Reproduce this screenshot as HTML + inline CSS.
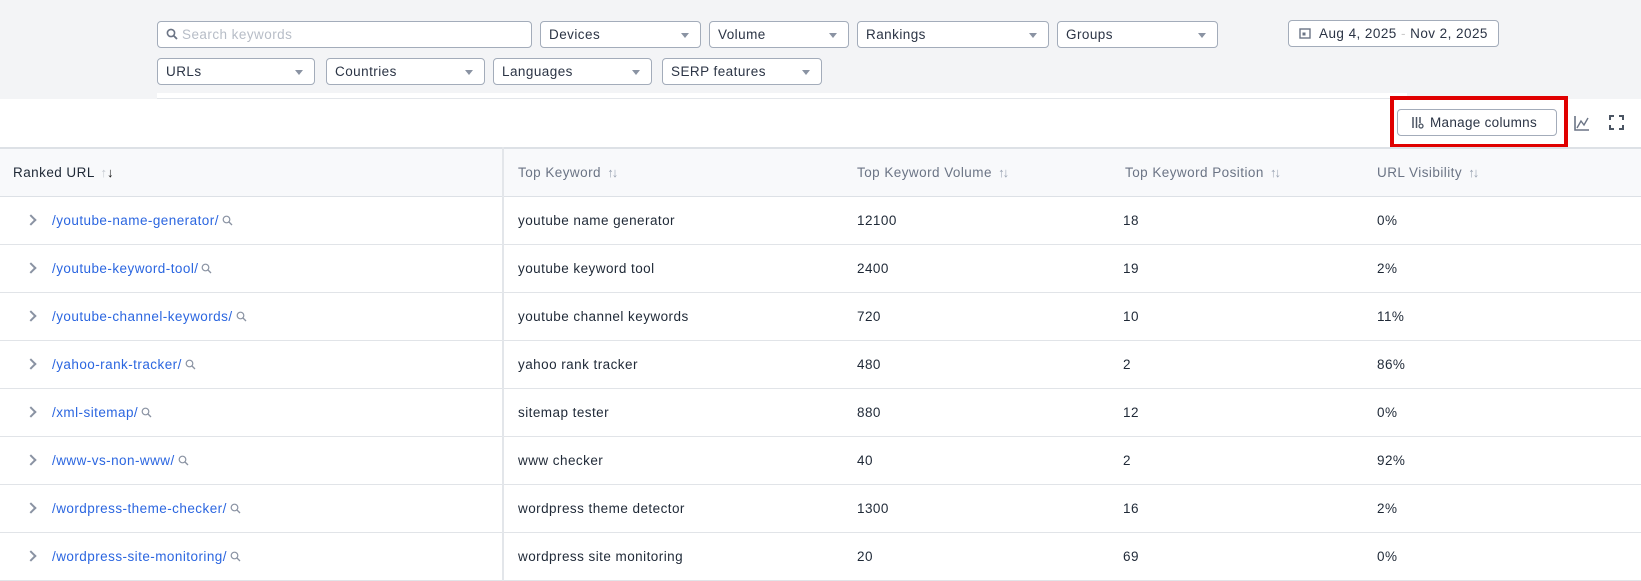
<!DOCTYPE html>
<html><head><meta charset="utf-8"><style>
*{box-sizing:border-box;margin:0;padding:0}
body{width:1641px;height:581px;overflow:hidden;background:#f3f4f6;font-family:"Liberation Sans",sans-serif;font-size:13.5px;color:#1f2937;position:relative;letter-spacing:0.45px}
.f{position:absolute;height:27px;border:1px solid #a3acba;border-radius:4px;background:#fff;color:#2b3445;padding-left:8px;line-height:25px;font-size:13.5px}
.f .c{position:absolute;right:11px;top:11px;width:0;height:0;border-left:4px solid transparent;border-right:4px solid transparent;border-top:5px solid #8a93a3}
.panel{position:absolute;left:0;top:99px;width:1641px;height:482px;background:#fff}
.strip{position:absolute;left:157px;top:93px;width:1250px;height:6px;background:#fff;border-bottom:1px solid #e3e6ea}
.hdr{position:absolute;left:0;top:147px;width:1641px;height:50px;background:#f8f9fb;border-top:2px solid #dde1e6;border-bottom:1px solid #dde1e6}
.div{position:absolute;left:502px;top:147px;width:2px;height:434px;background:#e3e6ea}
.h{position:absolute;top:165px;font-size:13.5px;color:#6b7485}
.r{position:absolute;left:0;width:1641px;height:48px;border-bottom:1px solid #e1e4e8}
.r span{position:absolute;top:16px}
.a{color:#2b66e0}
.chev{position:absolute;left:27px;top:19px;width:8px;height:8px;border-right:2px solid #8a93a3;border-top:2px solid #8a93a3;transform:rotate(45deg)}
.ar{color:#9aa3b2;font-size:13px;font-weight:bold;letter-spacing:-2px;margin-left:2px}
.mg{vertical-align:-1px;margin-left:3px}
</style></head><body>
<div class="f" style="left:157px;top:21px;width:375px;color:#b7bdc7"><svg width="12" height="12" style="vertical-align:-1px;margin-right:4px"><circle cx="5" cy="5" r="3.6" fill="none" stroke="#6b7485" stroke-width="1.6"/><path d="M7.6 7.6L11 11" stroke="#6b7485" stroke-width="1.8"/></svg>Search keywords</div>
<div class="f" style="left:540px;top:21px;width:161px">Devices<i class="c"></i></div>
<div class="f" style="left:709px;top:21px;width:140px">Volume<i class="c"></i></div>
<div class="f" style="left:857px;top:21px;width:192px">Rankings<i class="c"></i></div>
<div class="f" style="left:1057px;top:21px;width:161px">Groups<i class="c"></i></div>
<div class="f" style="left:1288px;top:20px;width:211px;padding-left:10px"><svg width="12" height="12" style="vertical-align:-1px;margin-right:8px"><rect x="1" y="2" width="10" height="9" fill="none" stroke="#6b7485" stroke-width="1.4"/><rect x="3.5" y="5.5" width="3" height="3" fill="#6b7485"/></svg>Aug 4, 2025 <span style="color:#ccc">-</span> Nov 2, 2025</div>
<div class="f" style="left:157px;top:58px;width:158px">URLs<i class="c"></i></div>
<div class="f" style="left:326px;top:58px;width:159px">Countries<i class="c"></i></div>
<div class="f" style="left:493px;top:58px;width:159px">Languages<i class="c"></i></div>
<div class="f" style="left:662px;top:58px;width:160px">SERP features<i class="c"></i></div>
<div class="panel"></div>
<div class="strip"></div>
<div style="position:absolute;left:1390px;top:96px;width:178px;height:52px;border:4px solid #e00000"></div>
<div class="f" style="left:1397px;top:109px;width:160px;height:27px;border-color:#a3acba;padding-left:13px;font-size:13.5px;letter-spacing:0.3px"><svg width="14" height="14" style="vertical-align:-2px;margin-right:5px"><path d="M2 2V13M5.5 2V13M9 2V8" stroke="#4b5563" stroke-width="1.5" fill="none"/><circle cx="10" cy="11" r="2" fill="none" stroke="#4b5563" stroke-width="1.3"/></svg>Manage columns</div>
<svg style="position:absolute;left:1574px;top:115px" width="16" height="16"><path d="M1 1V15H15" stroke="#6b7485" stroke-width="1.6" fill="none"/><path d="M3 13L7 6L10 10L14 3" stroke="#6b7485" stroke-width="1.4" fill="none"/></svg>
<svg style="position:absolute;left:1609px;top:115px" width="15" height="15"><path d="M1 5V1H5M10 1H14V5M14 10V14H10M5 14H1V10" stroke="#4b5563" stroke-width="2" fill="none"/></svg>
<div class="hdr"></div>
<div class="h" style="left:13px;color:#1f2937">Ranked URL <span class="ar" style="color:#c5c9d0">↑</span><span class="ar" style="color:#111">↓</span></div>
<div class="h" style="left:518px">Top Keyword <span class="ar">↑↓</span></div>
<div class="h" style="left:857px">Top Keyword Volume <span class="ar">↑↓</span></div>
<div class="h" style="left:1125px">Top Keyword Position <span class="ar">↑↓</span></div>
<div class="h" style="left:1377px">URL Visibility <span class="ar">↑↓</span></div>

<div class="r" style="top:197px"><i class="chev"></i><span class="a" style="left:52px">/youtube-name-generator/<svg class="mg" width="11" height="11"><circle cx="4.5" cy="4.5" r="3.3" fill="none" stroke="#8a93a3" stroke-width="1.2"/><path d="M7 7L10 10" stroke="#8a93a3" stroke-width="1.3"/></svg></span><span style="left:518px">youtube name generator</span><span style="left:857px">12100</span><span style="left:1123px">18</span><span style="left:1377px">0%</span></div>
<div class="r" style="top:245px"><i class="chev"></i><span class="a" style="left:52px">/youtube-keyword-tool/<svg class="mg" width="11" height="11"><circle cx="4.5" cy="4.5" r="3.3" fill="none" stroke="#8a93a3" stroke-width="1.2"/><path d="M7 7L10 10" stroke="#8a93a3" stroke-width="1.3"/></svg></span><span style="left:518px">youtube keyword tool</span><span style="left:857px">2400</span><span style="left:1123px">19</span><span style="left:1377px">2%</span></div>
<div class="r" style="top:293px"><i class="chev"></i><span class="a" style="left:52px">/youtube-channel-keywords/<svg class="mg" width="11" height="11"><circle cx="4.5" cy="4.5" r="3.3" fill="none" stroke="#8a93a3" stroke-width="1.2"/><path d="M7 7L10 10" stroke="#8a93a3" stroke-width="1.3"/></svg></span><span style="left:518px">youtube channel keywords</span><span style="left:857px">720</span><span style="left:1123px">10</span><span style="left:1377px">11%</span></div>
<div class="r" style="top:341px"><i class="chev"></i><span class="a" style="left:52px">/yahoo-rank-tracker/<svg class="mg" width="11" height="11"><circle cx="4.5" cy="4.5" r="3.3" fill="none" stroke="#8a93a3" stroke-width="1.2"/><path d="M7 7L10 10" stroke="#8a93a3" stroke-width="1.3"/></svg></span><span style="left:518px">yahoo rank tracker</span><span style="left:857px">480</span><span style="left:1123px">2</span><span style="left:1377px">86%</span></div>
<div class="r" style="top:389px"><i class="chev"></i><span class="a" style="left:52px">/xml-sitemap/<svg class="mg" width="11" height="11"><circle cx="4.5" cy="4.5" r="3.3" fill="none" stroke="#8a93a3" stroke-width="1.2"/><path d="M7 7L10 10" stroke="#8a93a3" stroke-width="1.3"/></svg></span><span style="left:518px">sitemap tester</span><span style="left:857px">880</span><span style="left:1123px">12</span><span style="left:1377px">0%</span></div>
<div class="r" style="top:437px"><i class="chev"></i><span class="a" style="left:52px">/www-vs-non-www/<svg class="mg" width="11" height="11"><circle cx="4.5" cy="4.5" r="3.3" fill="none" stroke="#8a93a3" stroke-width="1.2"/><path d="M7 7L10 10" stroke="#8a93a3" stroke-width="1.3"/></svg></span><span style="left:518px">www checker</span><span style="left:857px">40</span><span style="left:1123px">2</span><span style="left:1377px">92%</span></div>
<div class="r" style="top:485px"><i class="chev"></i><span class="a" style="left:52px">/wordpress-theme-checker/<svg class="mg" width="11" height="11"><circle cx="4.5" cy="4.5" r="3.3" fill="none" stroke="#8a93a3" stroke-width="1.2"/><path d="M7 7L10 10" stroke="#8a93a3" stroke-width="1.3"/></svg></span><span style="left:518px">wordpress theme detector</span><span style="left:857px">1300</span><span style="left:1123px">16</span><span style="left:1377px">2%</span></div>
<div class="r" style="top:533px"><i class="chev"></i><span class="a" style="left:52px">/wordpress-site-monitoring/<svg class="mg" width="11" height="11"><circle cx="4.5" cy="4.5" r="3.3" fill="none" stroke="#8a93a3" stroke-width="1.2"/><path d="M7 7L10 10" stroke="#8a93a3" stroke-width="1.3"/></svg></span><span style="left:518px">wordpress site monitoring</span><span style="left:857px">20</span><span style="left:1123px">69</span><span style="left:1377px">0%</span></div>
<div class="div"></div>
</body></html>
